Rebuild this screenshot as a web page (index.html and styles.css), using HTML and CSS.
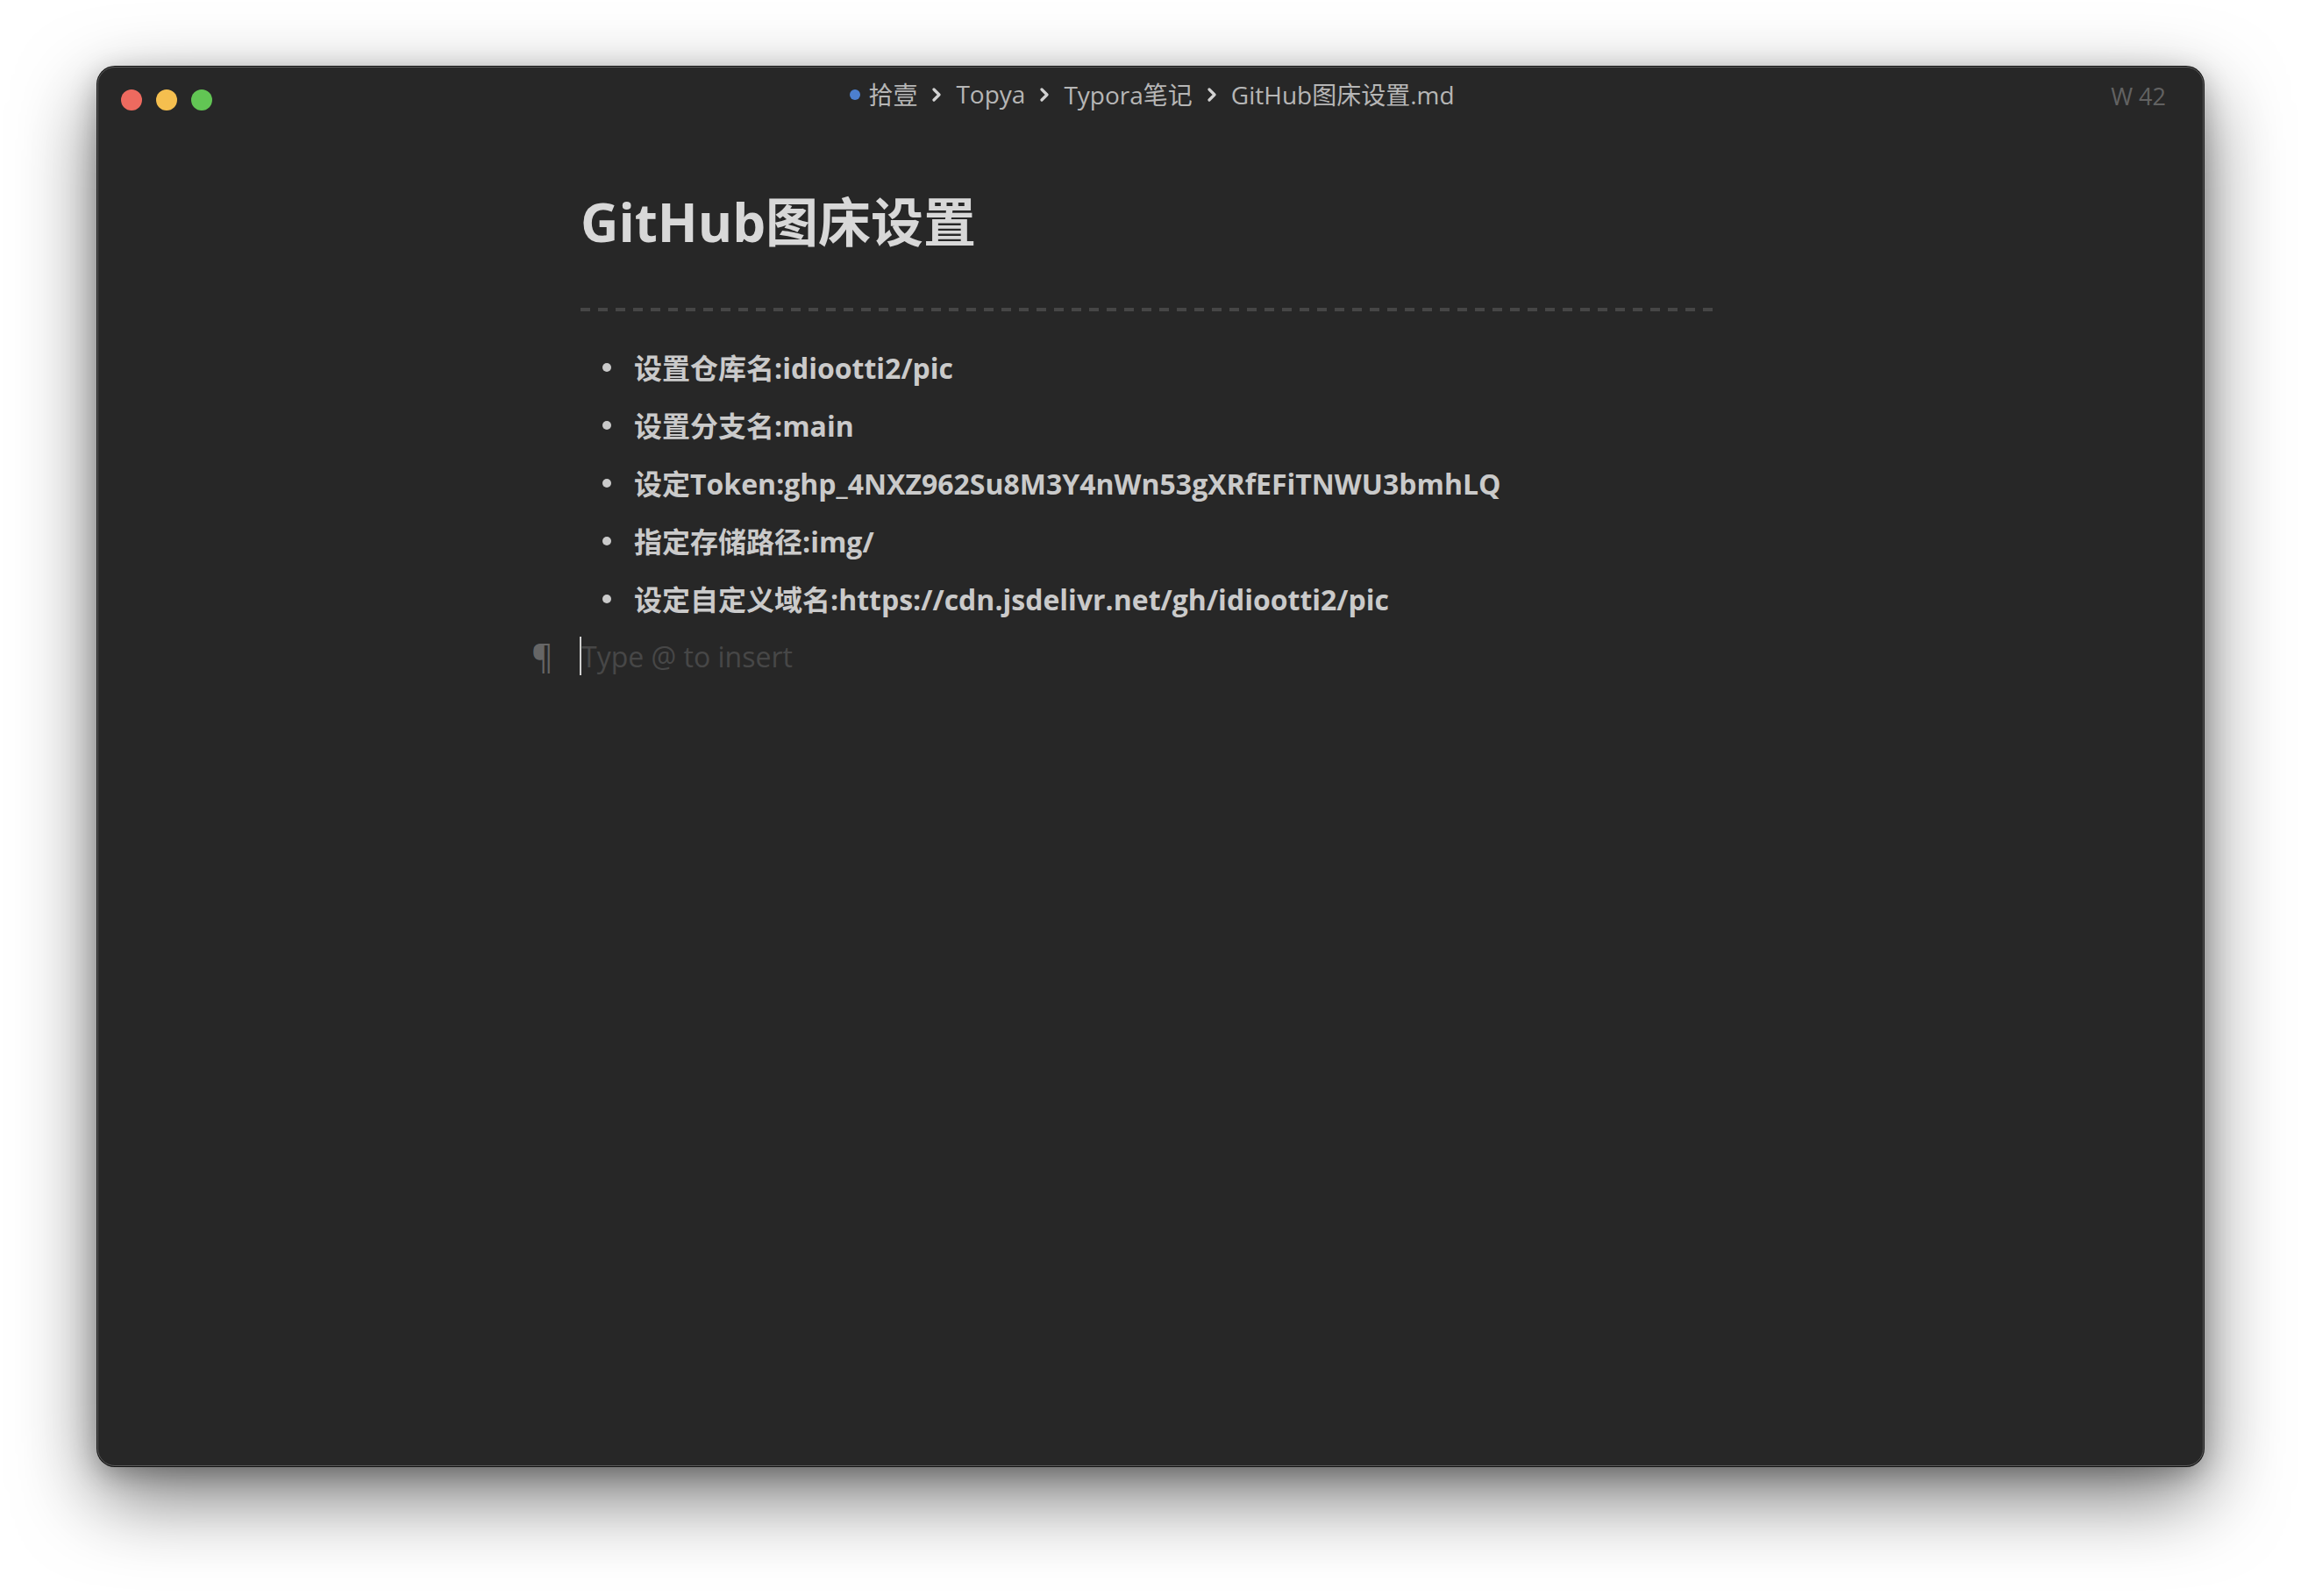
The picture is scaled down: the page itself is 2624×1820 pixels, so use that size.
FILE: index.html
```html
<!DOCTYPE html>
<html lang="zh-CN">
<head>
<meta charset="utf-8">
<title>GitHub图床设置.md</title>
<link rel="stylesheet" href="styles.css">
</head>
<body>
<div class="page">
  <div class="window">
    <header class="titlebar">
      <div class="lights">
        <span class="light red"></span>
        <span class="light yellow"></span>
        <span class="light green"></span>
      </div>
      <nav class="crumbs">
        <span class="dot"></span>
        <span class="crumb">拾壹</span>
        <svg class="chev" width="12" height="16" viewBox="0 0 12 16"><path d="M3 2 L9 8 L3 14" fill="none" stroke="#d2d2d2" stroke-width="3.2" stroke-linecap="round" stroke-linejoin="round"/></svg>
        <span class="crumb">Topya</span>
        <svg class="chev" width="12" height="16" viewBox="0 0 12 16"><path d="M3 2 L9 8 L3 14" fill="none" stroke="#d2d2d2" stroke-width="3.2" stroke-linecap="round" stroke-linejoin="round"/></svg>
        <span class="crumb">Typora笔记</span>
        <svg class="chev" width="12" height="16" viewBox="0 0 12 16"><path d="M3 2 L9 8 L3 14" fill="none" stroke="#d2d2d2" stroke-width="3.2" stroke-linecap="round" stroke-linejoin="round"/></svg>
        <span class="crumb">GitHub图床设置.md</span>
      </nav>
      <div class="count">W 42</div>
    </header>
    <main class="editor">
      <h1 class="title">GitHub图床设置</h1>
      <div class="rule"></div>
      <ul class="list">
        <li>设置仓库名:idiootti2/pic</li>
        <li>设置分支名:main</li>
        <li>设定Token: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</li>
        <li>指定存储路径:img/</li>
        <li>设定自定义域名:https://cdn.jsdelivr.net/gh/idiootti2/pic</li>
      </ul>
      <div class="para">
        <span class="pilcrow">¶</span>
        <span class="caret"></span>
        <span class="placeholder">Type @ to insert</span>
      </div>
    </main>
  </div>
</div>
</body>
</html>
```
FILE: styles.css
```css
html, body {
  margin: 0;
  padding: 0;
  background: #ffffff;
}

.page {
  width: 2624px;
  height: 1820px;
  box-sizing: border-box;
  padding: 76px 0 0 111px;
  overflow: hidden;
  font-family: "Open Sans", "Noto Sans CJK SC", sans-serif;
}

.window {
  width: 2402px;
  height: 1596px;
  box-sizing: border-box;
  background: #272727;
  border: 1px solid #5c5c5c;
  border-radius: 20px;
  box-shadow: 0 0 0 1px #111111, 0 34px 90px rgba(0, 0, 0, 0.55), 0 8px 30px rgba(0, 0, 0, 0.25);
  display: flex;
  flex-direction: column;
}

.titlebar {
  height: 72px;
  flex: none;
  display: grid;
  grid-template-columns: 1fr auto 1fr;
  align-items: center;
  padding: 2px 42px 0 26px;
  box-sizing: border-box;
}

.lights {
  display: flex;
  gap: 16px;
  align-items: center;
}

.light {
  width: 24px;
  height: 24px;
  border-radius: 50%;
}

.red { background: #ee6a5f; }
.yellow { background: #f5bf4f; }
.green { background: #62c554; }

.crumbs {
  display: flex;
  align-items: center;
  gap: 16px;
  font-size: 28px;
  color: #b6b6b6;
  margin: 0 0 15px 20px;
  white-space: nowrap;
}

.dot {
  width: 12px;
  height: 12px;
  border-radius: 50%;
  background: #4c7fce;
  margin-right: -7px;
  margin-top: 3px;
}

.chev {
  display: block;
  margin-top: 2px;
}

.count {
  justify-self: end;
  font-size: 27px;
  color: #626262;
  margin-bottom: 10px;
}

.editor {
  width: 1300px;
  margin: 0 auto;
  padding-top: 68px;
}

.title {
  margin: 0;
  font-size: 60px;
  line-height: 72px;
  font-weight: 700;
  color: #d8d8d8;
  white-space: nowrap;
}

.rule {
  margin-top: 62px;
  height: 4px;
  background: repeating-linear-gradient(to right, #464646 0 11px, transparent 11px 20px);
}

.list {
  list-style: none;
  margin: 39px 0 0;
  padding: 0;
}

.list li {
  display: flex;
  align-items: center;
  height: 48px;
  margin-bottom: 18px;
  font-size: 32px;
  font-weight: 700;
  color: #cacaca;
  white-space: nowrap;
}

.list li::before {
  content: "";
  flex: none;
  width: 10px;
  height: 10px;
  border-radius: 50%;
  background: #cacaca;
  margin: 2px 26px 0 25px;
}

.para {
  display: flex;
  align-items: center;
  height: 48px;
  margin-left: -56px;
}

.pilcrow {
  width: 55px;
  flex: none;
  font-size: 38px;
  color: #666666;
}

.caret {
  width: 2px;
  height: 44px;
  background: #d0d0d0;
  flex: none;
}

.placeholder {
  font-size: 32px;
  color: #474747;
}
```
